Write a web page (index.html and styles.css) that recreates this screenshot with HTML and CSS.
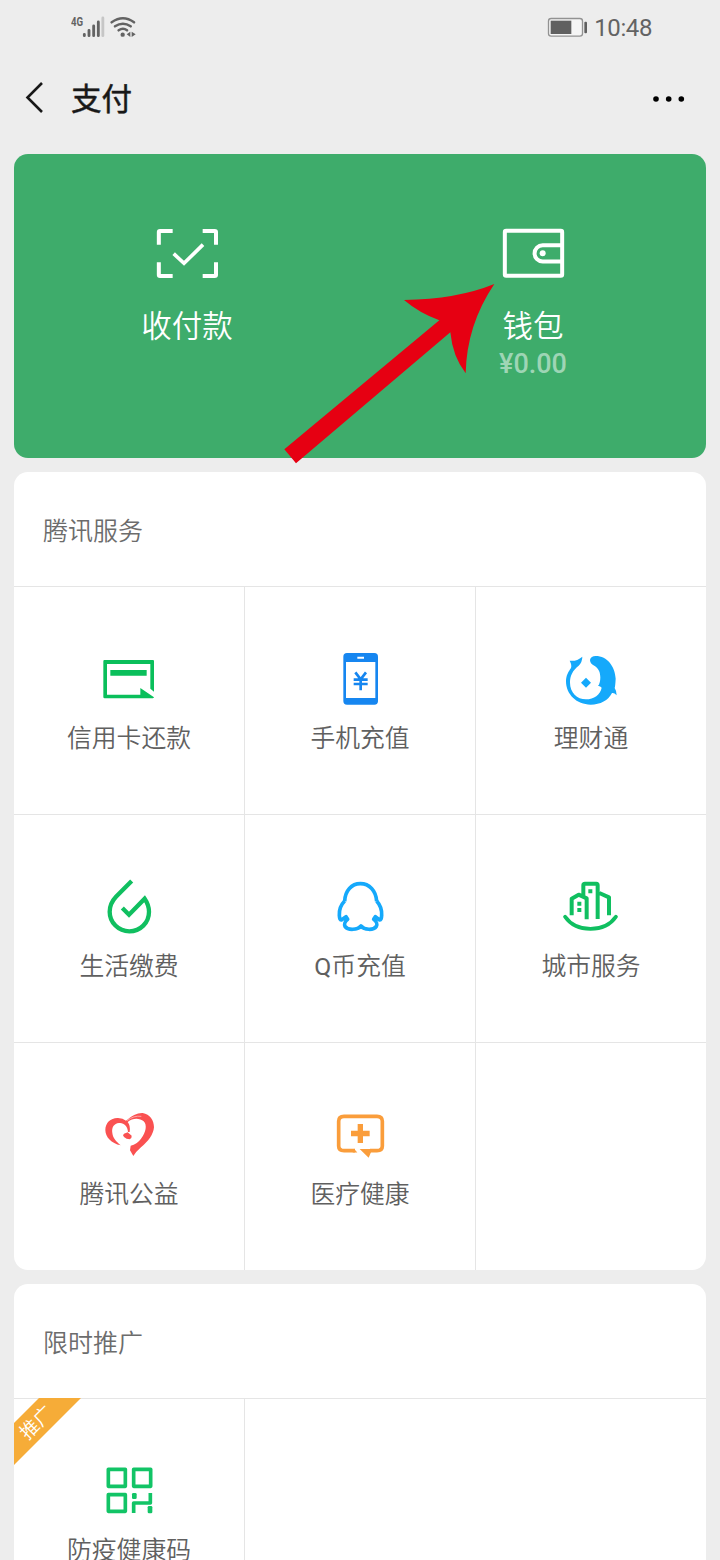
FILE: index.html
```html
<!DOCTYPE html>
<html lang="zh-CN">
<head>
<meta charset="utf-8">
<title>支付</title>
<link rel="stylesheet" href="styles.css">
</head>
<body>
<div class="screen">
  <header class="status">
    <div class="status-left">
      <span class="net">4G</span>
      <svg class="signal" viewBox="246 45 72 72" fill="none" stroke="#636363" stroke-width="8.500" stroke-linecap="round">
        <path d="M253 103V107M267 91V107M281 78V107M295 66V107"/><path d="M308.500 54V107" stroke="#c6c6c6"/>
      </svg>
      <svg class="wifi" viewBox="327 45 84 72" fill="none" stroke="#636363" stroke-width="7.500" stroke-linecap="round">
        <path d="M335 67Q369 43 402 67M345 79Q369 63 392 79M356 91Q369 82 381 91"/>
        <circle cx="368" cy="104" r="6.500" fill="#636363" stroke="none"/>
        <path d="M380 103L391 95V111ZM395 95L407 103L395 111Z" fill="#636363" stroke="none"/>
      </svg>
    </div>
    <div class="status-right">
      <svg class="battery" viewBox="81 51 126 63">
        <rect x="85.500" y="55.500" width="102" height="53" rx="8" fill="#f5f5f5" stroke="#929292" stroke-width="4"/>
        <rect x="92" y="62" width="62" height="40" fill="#606060"/>
        <rect x="193" y="65" width="8" height="35" rx="3" fill="#606060"/>
      </svg>
      <span class="clock">10:48</span>
    </div>
  </header>
  <nav class="bar">
    <svg class="back" viewBox="0 0 24 36" fill="none" stroke="#181818" stroke-width="2.600"><path d="M19 3L4.500 17.500L19 32"/></svg>
    <h1 class="title">支付</h1>
    <svg class="more" viewBox="0 0 36 10"><circle cx="5" cy="5" r="2.800"/><circle cx="17.700" cy="5" r="2.800"/><circle cx="30.300" cy="5" r="2.800"/></svg>
  </nav>
  <main class="content">
    <section class="hero">
      <div class="hero-item">
        <svg class="hero-icon" viewBox="93 54 216 216" fill="none" stroke="#fff" stroke-width="12">
          <path d="M116.500 134V96Q116.500 93 120 93H158M248 93H284Q288 93 288 96V134M116.500 187V225Q116.500 228 120 228H158M248 228H284Q288 228 288 225V187"/>
          <path d="M161 161L192 190L249 134" stroke-width="11"/>
        </svg>
        <span class="hero-label">收付款</span>
      </div>
      <div class="hero-item">
        <svg class="hero-icon" viewBox="681 24 216 216" fill="none" stroke="#fff" stroke-width="12">
          <rect x="704.500" y="62.500" width="172" height="135" rx="4"/>
          <path d="M876 106H818A24 24 0 0 0 818 154.500H876"/>
          <circle cx="818" cy="130" r="9" fill="#fff" stroke="none"/>
        </svg>
        <span class="hero-label">钱包</span>
        <span class="balance">¥0.00</span>
      </div>
      <svg class="arrow" viewBox="0 0 960 786"><path fill="#e60012" d="M43 718L508 331Q448 309 402 270Q560 268 673 222Q590 345 587 490Q548 440 541 367L78 760Z"/></svg>
    </section>

    <section class="card">
      <h2 class="card-head">腾讯服务</h2>
      <div class="grid">
        <div class="cell">
          <svg class="icon" viewBox="171 21 192 192">
            <path fill="#0abf5b" fill-rule="evenodd" d="M193 60H339Q342 60 342 64V155L331 146V72H201V164H301V144L342 172Q341 175 338 175H194Q190 175 190 171V64Q190 60 193 60ZM211 90H320V107H211Z"/>
          </svg><span class="label">信用卡还款</span>
        </div>
        <div class="cell">
          <svg class="icon" viewBox="114 21 192 192">
            <rect x="160" y="39" width="104" height="155" rx="11" fill="#1686f0"/><path fill="#fff" d="M168 66H256V174H168ZM202 50H222V56H202Z"/>
            <path d="M196 97L212 118L228 97M191 119H233M191 132H233M212 117V151" fill="none" stroke="#1686f0" stroke-width="8"/>
          </svg><span class="label">手机充值</span>
        </div>
        <div class="cell">
          <svg class="icon" viewBox="87 21 192 192" fill="#15a9fb">
            <path d="M119 62Q139 65 157 50Q157 66 146 77C128 91 120 107 120 128C120 157 141 178 168 178C192 178 211 164 215 143Q210 137 204 138Q211 130 211 112C211 91 202 82 188 74C175 65 178 48 197 48C232 48 255 80 257 116Q256 137 254 144Q260 153 260 166Q252 157 246 159C235 181 211 194 182 194C140 194 108 163 108 124C108 106 116 94 123 84Q126 75 119 62Z"/>
            <path d="M168 113L183 128L168 143L153 128Z"/>
          </svg><span class="label">理财通</span>
        </div>
        <div class="cell">
          <svg class="icon" viewBox="111 30 192 192" fill="none" stroke="#10bf60" stroke-width="13">
            <path d="M215 48L168 95C154 110 149 123 149 140A59 59 0 0 0 208 199C241 199 267 173 267 140Q267 120 254 101L207 149L187 129"/>
          </svg><span class="label">生活缴费</span>
        </div>
        <div class="cell">
          <svg class="icon" viewBox="84 30 192 192" fill="none" stroke="#15a9fb" stroke-width="11" stroke-linejoin="round">
            <path d="M134 109C135 77 155 56 181 56C208 56 228 77 230 109"/>
            <path d="M134 108C124 118 117 133 118 151Q119 166 124 165L138 155L143 163C135 169 132 178 135 184C144 197 173 195 183 183C193 195 220 197 229 184C233 178 229 169 221 163L226 155L239 165Q244 166 245 151C246 133 239 118 230 108"/>
          </svg><span class="label"><span class="latin">Q</span>币充值</span>
        </div>
        <div class="cell">
          <svg class="icon" viewBox="777 30 192 192" fill="none" stroke="#10bf60" stroke-width="12">
            <path d="M815 151V101L836 89L860 100V163M850 92V61Q850 56 855 56H889Q893 56 893 61V162M898 84L927 97V151" stroke-linejoin="round"/>
            <path d="M795 155C829 204 914 204 948 155" stroke-width="11" stroke-linecap="round"/>
            <path d="M832 110H844V122H832ZM832 129H844V141H832ZM865 73H877V85H865Z" fill="#10bf60" stroke="none"/>
          </svg><span class="label">城市服务</span>
        </div>
        <div class="cell">
          <svg class="icon" viewBox="111 24 192 192" fill="#fa5151">
            <path d="M182 151C154 145 136 126 136 105C136 83 153 68 174 69Q189 70 198 77Q224 53 248 54C270 58 282 75 282 97C280 119 265 139 243 157Q228 170 220 183L210 166L212 152Q231 148 243 131C258 112 262 90 251 79C240 69 219 67 203 81Q212 92 209 111H204C203 93 191 82 177 84C162 85 154 98 157 114C159 130 169 140 182 151Z"/>
            <path d="M192 116L203 112L215 122Q216 130 209 133Q199 133 192 126L189 121Z"/>
            <path d="M201 77Q221 61 244 64" fill="none" stroke="#fff" stroke-width="1.500"/>
          </svg><span class="label">腾讯公益</span>
        </div>
        <div class="cell">
          <svg class="icon" viewBox="84 24 192 192" fill="#fa9d3b">
            <path d="M165 167H132Q116 167 116 153V79Q116 64 132 64H231Q247 64 247 79V153Q247 167 231 167H210" fill="none" stroke="#fa9d3b" stroke-width="11"/>
            <path d="M162 161.500L172 172.500H158ZM179 162H217L206 188ZM173 87H189V107H209V124H189V144H173V124H153V107H173Z"/>
          </svg><span class="label">医疗健康</span>
        </div>
        <div class="cell"></div>
      </div>
    </section>

    <section class="card">
      <h2 class="card-head">限时推广</h2>
      <div class="grid">
        <div class="cell promo">
          <div class="ribbon"><span class="ribbon-text">推广</span></div>
          <svg class="icon" viewBox="291 237 192 192" fill="none" stroke="#12c466" stroke-width="11" stroke-linejoin="round">
            <path d="M325 268H376V319H325ZM401 268H452V319H401ZM325 344H376V394H325Z"/>
            <path d="M401 399V369H451V339"/>
            <rect x="396" y="339" width="14" height="18" rx="4" fill="#12c466" stroke="none"/><rect x="443" y="378" width="14" height="22" rx="4" fill="#12c466" stroke="none"/>
          </svg><span class="label">防疫健康码</span>
        </div>
      </div>
    </section>
  </main>
</div>
</body>
</html>
```

FILE: styles.css
```css
* { box-sizing: border-box; }
body {
  margin: 0;
  background: #ededed;
  font-family: Roboto, "Noto Sans CJK SC", sans-serif;
}
svg { display: block; flex: none; }
.screen { width: 720px; height: 1560px; overflow: hidden; }
.status {
  height: 56px;
  padding: 0 68px 0 71px;
  display: flex;
  justify-content: space-between;
  color: #636363;
}
.status-left { display: flex; padding-top: 15px; }
.net { width: 11px; font: 700 13px/13px Roboto, sans-serif; transform: scaleX(.74); transform-origin: left; }
.signal { width: 24px; height: 24px; }
.wifi { width: 28px; height: 24px; margin-left: 3px; }
.status-right { display: flex; padding-top: 17px; }
.battery { width: 42px; height: 21px; }
.clock { margin-left: 5px; font-size: 24px; line-height: 23px; letter-spacing: -.4px; }
.bar { height: 84px; display: flex; align-items: center; padding: 0 33px 0 23px; }
.back { width: 24px; height: 36px; }
.title { margin: 4px auto 0 24px; font-size: 30.500px; line-height: 40px; font-weight: 400; -webkit-text-stroke: .5px #181818; color: #181818; }
.more { width: 36px; height: 10px; margin-top: 1px; }
.content { padding: 14px 14px 0; display: flex; flex-direction: column; gap: 14px; }
.hero {
  position: relative;
  height: 304px;
  display: flex;
  border-radius: 14px;
  background: #3eac6b;
  color: #fff;
}
.hero-item { flex: 1; display: flex; flex-direction: column; align-items: center; padding-top: 64px; }
.hero-icon { width: 72px; height: 72px; }
.hero-label { margin-top: 17px; font-size: 30.500px; line-height: 40px; font-weight: 350; }
.balance { font-size: 27px; line-height: 34px; font-weight: 500; color: #9ed5b5; }
.arrow { position: absolute; left: 256px; top: 56px; width: 320px; height: 262px; z-index: 1; }
.card { background: #fff; border-radius: 14px; overflow: hidden; flex: none; }
.card-head { margin: 0; height: 114px; padding: 0 29px; font-size: 25px; line-height: 119px; font-weight: 350; color: #6c6c6c; }
.grid { display: grid; grid-template-columns: 231px 231px 230px; border-top: 1px solid #e5e5e5; }
.cell {
  height: 228px;
  padding-top: 60px;
  border-right: 1px solid #e5e5e5;
  border-bottom: 1px solid #e5e5e5;
  display: flex;
  flex-direction: column;
  align-items: center;
}
.cell:nth-child(3n) { border-right: 0; }
.cell:nth-child(n+7) { border-bottom: 0; height: 227px; }
.icon { width: 64px; height: 64px; }
.label { margin-top: 13px; font-size: 24.800px; line-height: 30px; font-weight: 350; color: #606060; white-space: nowrap; }
.latin { font-weight: 400; }
.promo { position: relative; }
.ribbon {
  position: absolute;
  left: 0;
  top: -1px;
  width: 67px;
  height: 67px;
  background: #f6ac38;
  clip-path: polygon(25px 0, 67px 0, 0 67px, 0 25px);
}
.ribbon-text { position: absolute; left: 1px; top: 13px; width: 44px; text-align: center; font-size: 19px; line-height: 24px; font-weight: 350; color: #fff; transform: rotate(-45deg); }
```
